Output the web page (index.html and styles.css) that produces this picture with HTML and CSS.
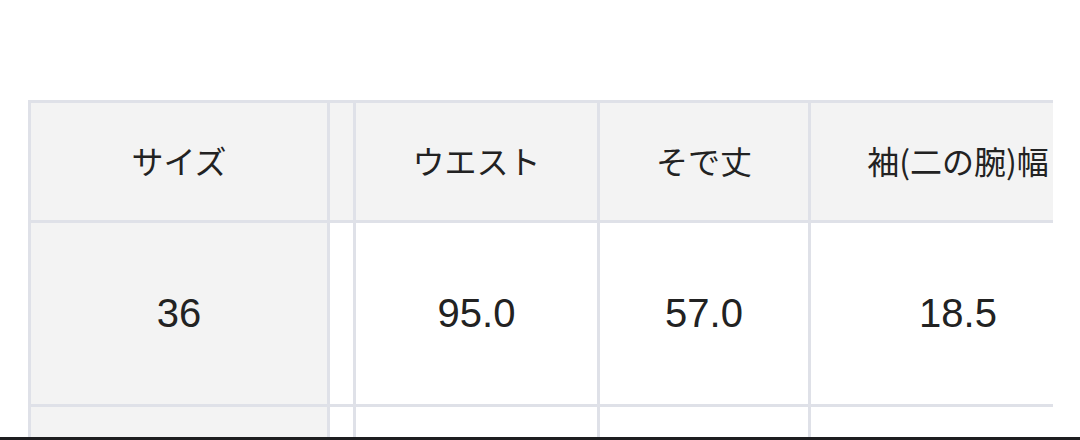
FILE: index.html
```html
<!DOCTYPE html>
<html lang="ja">
<head>
<meta charset="utf-8">
<title>サイズ表</title>
<link rel="stylesheet" href="styles.css">
</head>
<body>
<div class="wrap">
  <div class="size-table">
    <div class="cell head">サイズ</div>
    <div class="cell head spacer"></div>
    <div class="cell head">ウエスト</div>
    <div class="cell head">そで丈</div>
    <div class="cell head">袖(二の腕)幅</div>

    <div class="cell first num">36</div>
    <div class="cell spacer"></div>
    <div class="cell num">95.0</div>
    <div class="cell num">57.0</div>
    <div class="cell num">18.5</div>

    <div class="cell first num"></div>
    <div class="cell spacer"></div>
    <div class="cell num"></div>
    <div class="cell num"></div>
    <div class="cell num"></div>
  </div>
</div>
<div class="bottom-bar"></div>
</body>
</html>
```

FILE: styles.css
```css
html, body {
  margin: 0;
  padding: 0;
  background: #ffffff;
}

body {
  height: 440px;
  overflow: hidden;
  display: flex;
  flex-direction: column;
  color: #222222;
  font-family: "Liberation Sans", "Noto Sans CJK JP", sans-serif;
}

.wrap {
  flex: 1;
  min-height: 0;
  width: 1025px;
  padding: 100px 0 0 28px;
  overflow: hidden;
}

.size-table {
  display: grid;
  grid-template-columns: 299px 26px 244px 211px 297px;
  grid-template-rows: 120px 184px 184px;
  width: max-content;
  border-left: 3px solid #dfe1e8;
  border-top: 3px solid #dfe1e8;
}

.cell {
  box-sizing: border-box;
  border-right: 3px solid #dfe1e8;
  border-bottom: 3px solid #dfe1e8;
  display: flex;
  align-items: center;
  justify-content: center;
  background: #ffffff;
  white-space: nowrap;
}

.head {
  background: #f3f3f3;
  font-family: "Noto Sans CJK JP", "Liberation Sans", sans-serif;
  font-size: 32px;
  padding-bottom: 4px;
}

.first {
  background: #f3f3f3;
}

.num {
  font-size: 40px;
}

.bottom-bar {
  height: 3px;
  background: #1e1e20;
}
```
